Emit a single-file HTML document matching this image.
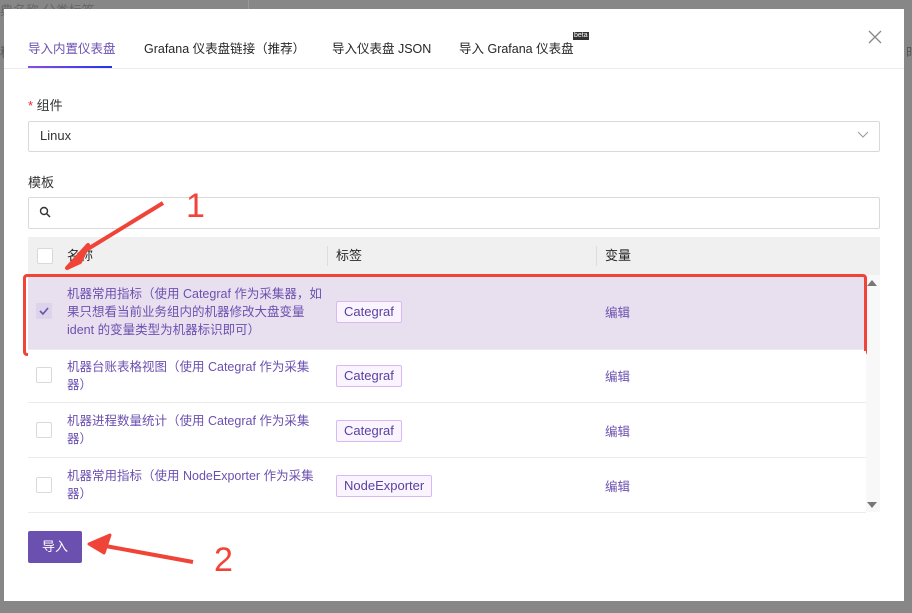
<!DOCTYPE html>
<html><head><meta charset="utf-8"><style>
body{margin:0;width:912px;height:613px;background:#878787;position:relative;overflow:hidden;font-family:"Liberation Sans","Noto Sans CJK SC",sans-serif;font-size:13px;color:#333}
.a{position:absolute}
.bgt{color:#666;font-size:13px}
.modal{left:4px;top:9px;width:900px;height:592px;background:#fff}
.tab{top:38px;font-size:12.5px;color:#262626}
.sel{color:#6c50b0}
.row{left:28px;width:838px;border-bottom:1px solid #ececec;background:#fff}
.cb{width:14px;height:14px;border:1px solid #d9d9d9;border-radius:2px;background:#fff}
.nm{left:67px;width:258px;color:#6c50b0;font-size:12.5px;line-height:18px}
.tag{left:336px;height:20px;border:1px solid #d8b9f5;background:#faf4ff;color:#5a3fa0;padding:0 7px;line-height:20px;font-size:13px;border-radius:2px}
.ed{left:605px;color:#6c50b0;font-size:12.5px}
</style></head><body>
<div class="a bgt" style="left:0;top:0">典名称 分类标签</div>
<div class="a" style="left:248px;top:0;width:1px;height:9px;background:#999"></div>
<div class="a" style="left:0;top:42px;color:#555">称</div>
<div class="a" style="left:906px;top:42px;color:#555">时</div>
<div class="a modal"></div>
<div class="a tab sel" style="left:28px">导入内置仪表盘</div>
<div class="a tab" style="left:144px">Grafana 仪表盘链接（推荐）</div>
<div class="a tab" style="left:332px">导入仪表盘 JSON</div>
<div class="a tab" style="left:459px">导入 Grafana 仪表盘</div>
<div class="a" style="left:573px;top:32px;background:#333;color:#fff;font-size:7px;line-height:8px;padding:0 1px">beta</div>
<div class="a" style="left:28px;top:66px;width:84px;height:2px;background:linear-gradient(90deg,#8b4fe0,#2233ee)"></div>
<div class="a" style="left:4px;top:68px;width:900px;height:1px;background:#ececec"></div>
<svg class="a" style="left:868px;top:30px" width="14" height="14"><path d="M1 1L13 13M13 1L1 13" stroke="#888" stroke-width="1.3"/></svg>
<div class="a" style="left:28px;top:95px"><span style="color:#f5222d">* </span>组件</div>
<div class="a" style="left:28px;top:121px;width:850px;height:29px;border:1px solid #d9d9d9;border-radius:2px"></div>
<div class="a" style="left:40px;top:128px">Linux</div>
<svg class="a" style="left:857px;top:131px" width="12" height="8"><path d="M1 1L6 6L11 1" stroke="#999" fill="none"/></svg>
<div class="a" style="left:28px;top:172px">模板</div>
<div class="a" style="left:28px;top:197px;width:850px;height:30px;border:1px solid #d9d9d9;border-radius:2px"></div>
<svg class="a" style="left:39px;top:206px" width="12" height="12"><circle cx="5" cy="5" r="3.5" stroke="#333" stroke-width="1.4" fill="none"/><path d="M7.5 7.5L11 11" stroke="#333" stroke-width="1.5"/></svg>
<div class="a" style="left:28px;top:237px;width:852px;height:38px;background:#f0f0f0"></div>
<div class="a cb" style="left:37px;top:248px"></div>
<div class="a" style="left:67px;top:245px;color:#262626">名称</div>
<div class="a" style="left:327px;top:246px;width:1px;height:20px;background:#ddd"></div>
<div class="a" style="left:336px;top:245px;color:#262626">标签</div>
<div class="a" style="left:596px;top:246px;width:1px;height:20px;background:#ddd"></div>
<div class="a" style="left:605px;top:245px;color:#262626">变量</div>
<div class="a" style="left:866px;top:275px;width:14px;height:237px;background:#f8f8f8"></div>
<svg class="a" style="left:867px;top:279px" width="10" height="8"><path d="M0 7L5 1L10 7Z" fill="#777"/></svg>
<svg class="a" style="left:867px;top:501px" width="10" height="8"><path d="M0 1L5 7L10 1Z" fill="#777"/></svg>
<div class="a row" style="top:277px;height:72px;background:#e8e0ef"></div>
<div class="a cb" style="left:36px;top:303px;background:#ddd3ea;border-color:#ddd3ea"></div>
<svg class="a" style="left:38px;top:305px" width="12" height="12"><path d="M2 6L5 9L10 3" stroke="#6c50b0" stroke-width="1.6" fill="none"/></svg>
<div class="a nm" style="top:285px">机器常用指标（使用 Categraf 作为采集器，如果只想看当前业务组内的机器修改大盘变量 ident 的变量类型为机器标识即可）</div>
<div class="a tag" style="top:301px">Categraf</div>
<div class="a ed" style="top:302px">编辑</div>
<div class="a" style="left:23px;top:274px;width:838px;height:76px;border:3px solid #ef4437;border-radius:4px"></div>
<div class="a row" style="top:351px;height:51px"></div>
<div class="a cb" style="left:36px;top:367px"></div>
<div class="a nm" style="top:358px">机器台账表格视图（使用 Categraf 作为采集器）</div>
<div class="a tag" style="top:365px">Categraf</div>
<div class="a ed" style="top:366px">编辑</div>
<div class="a row" style="top:403px;height:54px"></div>
<div class="a cb" style="left:36px;top:422px"></div>
<div class="a nm" style="top:412px">机器进程数量统计（使用 Categraf 作为采集器）</div>
<div class="a tag" style="top:420px">Categraf</div>
<div class="a ed" style="top:421px">编辑</div>
<div class="a row" style="top:458px;height:54px"></div>
<div class="a cb" style="left:36px;top:477px"></div>
<div class="a nm" style="top:467px">机器常用指标（使用 NodeExporter 作为采集器）</div>
<div class="a tag" style="top:475px">NodeExporter</div>
<div class="a ed" style="top:476px">编辑</div>
<div class="a" style="left:28px;top:531px;width:54px;height:32px;background:#6c50b0;border-radius:2px;color:#fff;text-align:center;line-height:32px">导入</div>
<svg class="a" style="left:0;top:0" width="912" height="613">
<path d="M163 203L78 255" stroke="#ef4437" stroke-width="4"/>
<path d="M67 268L88 245L80 262Z" fill="#ef4437" stroke="#ef4437" stroke-width="4" stroke-linejoin="round"/>
<path d="M193 562L100 545" stroke="#ef4437" stroke-width="4"/>
<path d="M89 544L110 535L104 553Z" fill="#ef4437" stroke="#ef4437" stroke-width="3" stroke-linejoin="round"/>
<text x="186" y="217" font-family="Liberation Sans" font-size="34" fill="#ef4437">1</text>
<text x="214" y="571" font-family="Liberation Sans" font-size="34" fill="#ef4437">2</text>
</svg>
</body></html>
